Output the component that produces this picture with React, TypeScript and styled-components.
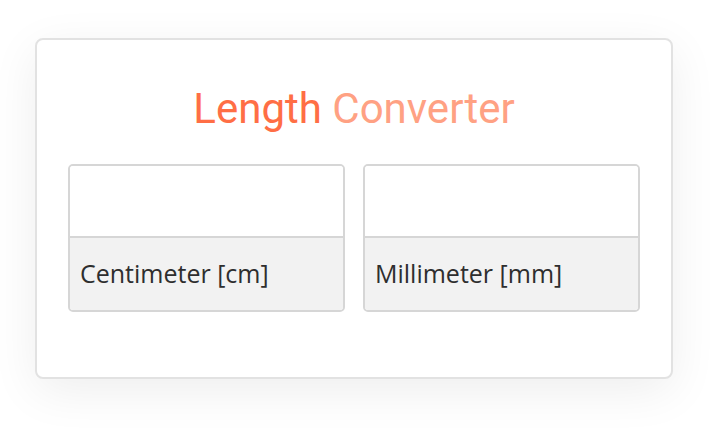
import React, { FC } from 'react';
import styled, { createGlobalStyle } from 'styled-components';

const GlobalStyle = createGlobalStyle`
	html, body {
		margin: 0;
		padding: 0;
		background: #ffffff;
	}
	* {
		box-sizing: border-box;
	}
`;

const units = [
	{ id: 'cm', label: 'Centimeter [cm]' },
	{ id: 'mm', label: 'Millimeter [mm]' },
];

const App: FC = () => {
	return (
		<>
			<GlobalStyle />
			<Page>
				<Card>
					<Title>
						<Strong>Length</Strong> <Light>Converter</Light>
					</Title>
					<Fields>
						{units.map((unit) => (
							<Field key={unit.id}>
								<Input type="text" aria-label={unit.label} />
								<Label>{unit.label}</Label>
							</Field>
						))}
					</Fields>
				</Card>
			</Page>
		</>
	);
};

export default App;

const Page = styled.div`
	width: 715px;
	height: 428px;
	padding: 38px 0 0 35px;
`;

const Card = styled.section`
	width: 638px;
	height: 341px;
	background: #ffffff;
	border: 2px solid #e2e2e2;
	border-radius: 8px;
	box-shadow: 0 12px 48px rgba(0, 0, 0, 0.07);
	padding: 42px 31px 0;
`;

const Title = styled.h1`
	margin: 0 0 28px;
	text-align: center;
	font-family: Roboto, 'Liberation Sans', sans-serif;
	font-weight: 400;
	font-size: 42px;
	line-height: 54px;
`;

const Strong = styled.span`
	color: #ff6e45;
`;

const Light = styled.span`
	color: #ffa183;
`;

const Fields = styled.div`
	display: grid;
	grid-template-columns: 1fr 1fr;
	gap: 18px;
`;

const Field = styled.div`
	display: flex;
	flex-direction: column;
	border: 2px solid #d6d6d6;
	border-radius: 5px;
	overflow: hidden;
`;

const Input = styled.input`
	height: 72px;
	border: none;
	border-bottom: 2px solid #d6d6d6;
	outline: none;
	background: #ffffff;
	font-family: 'Open Sans', sans-serif;
	font-size: 25px;
	padding: 0 12px;
`;

const Label = styled.div`
	height: 72px;
	display: flex;
	align-items: center;
	padding: 0 10px 3px;
	background: #f2f2f2;
	color: #2e2e2e;
	font-family: 'Open Sans', sans-serif;
	font-size: 25px;
`;
